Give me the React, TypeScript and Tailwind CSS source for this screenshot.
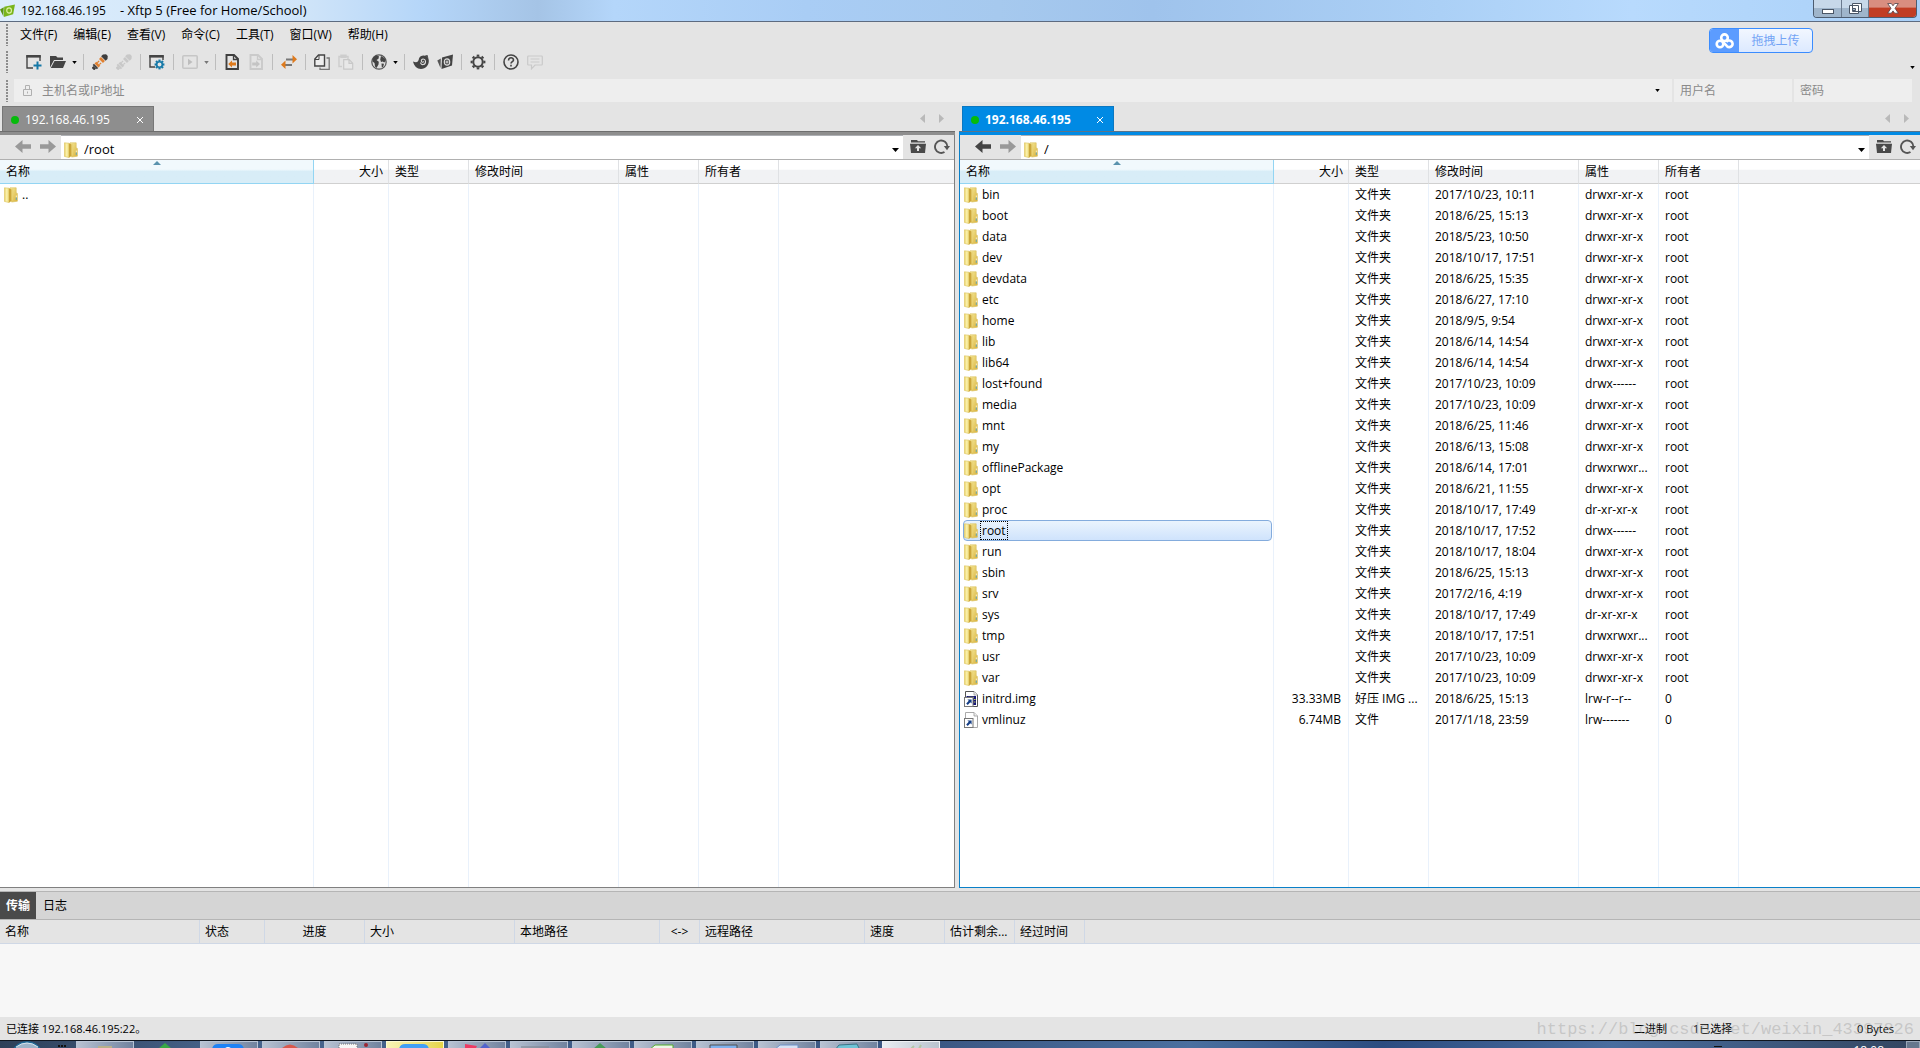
import React from "react";

type Entry = {
  name: string;
  size?: string;
  type: string;
  time: string;
  attr: string;
  owner: string;
  kind?: "folder" | "img" | "file";
  selected?: boolean;
};

const dir = (name: string, time: string, attr = "drwxr-xr-x", selected = false): Entry => ({
  name,
  type: "文件夹",
  time,
  attr,
  owner: "root",
  kind: "folder",
  selected,
});

const remoteEntries: Entry[] = [
  dir("bin", "2017/10/23, 10:11"),
  dir("boot", "2018/6/25, 15:13"),
  dir("data", "2018/5/23, 10:50"),
  dir("dev", "2018/10/17, 17:51"),
  dir("devdata", "2018/6/25, 15:35"),
  dir("etc", "2018/6/27, 17:10"),
  dir("home", "2018/9/5, 9:54"),
  dir("lib", "2018/6/14, 14:54"),
  dir("lib64", "2018/6/14, 14:54"),
  dir("lost+found", "2017/10/23, 10:09", "drwx------"),
  dir("media", "2017/10/23, 10:09"),
  dir("mnt", "2018/6/25, 11:46"),
  dir("my", "2018/6/13, 15:08"),
  dir("offlinePackage", "2018/6/14, 17:01", "drwxrwxr..."),
  dir("opt", "2018/6/21, 11:55"),
  dir("proc", "2018/10/17, 17:49", "dr-xr-xr-x"),
  dir("root", "2018/10/17, 17:52", "drwx------", true),
  dir("run", "2018/10/17, 18:04"),
  dir("sbin", "2018/6/25, 15:13"),
  dir("srv", "2017/2/16, 4:19"),
  dir("sys", "2018/10/17, 17:49", "dr-xr-xr-x"),
  dir("tmp", "2018/10/17, 17:51", "drwxrwxr..."),
  dir("usr", "2017/10/23, 10:09"),
  dir("var", "2017/10/23, 10:09"),
  { name: "initrd.img", size: "33.33MB", type: "好压 IMG ...", time: "2018/6/25, 15:13", attr: "lrw-r--r--", owner: "0", kind: "img" },
  { name: "vmlinuz", size: "6.74MB", type: "文件", time: "2017/1/18, 23:59", attr: "lrw-------", owner: "0", kind: "file" },
];

const localEntries: Entry[] = [{ name: "..", type: "", time: "", attr: "", owner: "", kind: "folder" }];

function Svg({ children, className = "size-4" }: { children: React.ReactNode; className?: string }) {
  return (
    <svg viewBox="0 0 16 16" className={`${className} shrink-0`} fill="none" aria-hidden="true">
      {children}
    </svg>
  );
}

function FolderIcon() {
  return (
    <svg viewBox="0 0 14 16" className="h-4 w-3.5 shrink-0" aria-hidden="true">
      <defs>
        <linearGradient id="fold" x1="0" x2="1" y1="0" y2="1">
          <stop offset="0" stopColor="#f6ea9a" />
          <stop offset="1" stopColor="#d9b23c" />
        </linearGradient>
        <linearGradient id="flap" x1="0" x2="1" y1="0" y2="0">
          <stop offset="0" stopColor="#e9d063" />
          <stop offset=".5" stopColor="#fbf2b0" />
          <stop offset="1" stopColor="#ecd670" />
        </linearGradient>
      </defs>
      <path d="M6 0.8H12.200V6L13.400 6.400V14.200L8 15L6 14Z" fill="url(#fold)" stroke="#d8bd5a" strokeWidth=".6" />
      <path d="M0.400 0.800L5 1.200V15.600L0.400 14.400Z" fill="url(#flap)" stroke="#dcc35e" strokeWidth=".6" />
      <path d="M5 1.200L7.600 2.400V13.600L5 15.800Z" fill="#cba63a" />
      <path d="M7.600 2.400L8.800 1.600V13.200L7.600 13.600Z" fill="#e9d277" />
      <path d="M12.300 8.500v2" stroke="#fbf6dc" strokeWidth=".9" />
      <path d="M12.300 10.500v2.400" stroke="#4fa3c8" strokeWidth=".9" />
    </svg>
  );
}

function LinkFileIcon({ image }: { image: boolean }) {
  return (
    <svg viewBox="0 0 14 16" className="h-4 w-3.5 shrink-0" aria-hidden="true">
      <path d="M1.5.5h8.5l3.5 3.5v11.5h-12z" fill="#fff" stroke={image ? "#555" : "#aaa"} />
      <path d="M10 .5V4h3.5" fill="#eee" stroke="#999" strokeWidth=".8" />
      {image && <path d="M2.5 5h9.500v9H8V8H2.5z" fill="#16167a" />}
      {image && <path d="M4 6.300h6M10 8.500h1.500M10 11h1.500" stroke="#b8c84a" />}
      <rect x=".5" y="6.500" width="8.500" height="9" fill="#fff" stroke="#777" />
      <path d="M3.400 8.400h4.200v4.200L6.300 11.300 3.700 14 2.200 12.600 4.800 9.800z" fill="#153e86" />
    </svg>
  );
}

function Caret({ className = "text-black" }: { className?: string }) {
  return (
    <svg viewBox="0 0 6 4" className={`h-[3px] w-[5px] shrink-0 ${className}`} aria-hidden="true">
      <path d="M0 0h6L3 4z" fill="currentColor" />
    </svg>
  );
}

function Grip() {
  return <span className="ml-1.5 h-[22px] w-0.5 shrink-0 bg-[repeating-linear-gradient(to_bottom,#8c8c8c_0_2px,transparent_2px_3px)]" />;
}

function Sep() {
  return (
    <span className="flex w-[9px] shrink-0 justify-center">
      <span className="h-4 w-px bg-[#bdbdbd]" />
    </span>
  );
}

function Tool({ label, children }: { label: string; children: React.ReactNode }) {
  return (
    <button type="button" aria-label={label} title={label} className="flex h-6 w-6 shrink-0 items-center justify-center">
      <Svg>{children}</Svg>
    </button>
  );
}

function Drop({ label, muted = false }: { label: string; muted?: boolean }) {
  return (
    <button type="button" aria-label={label} className="flex h-6 w-[9px] shrink-0 items-center justify-center">
      <Caret className={muted ? "text-[#777]" : "text-black"} />
    </button>
  );
}

const teeth = [0, 45, 90, 135, 180, 225, 270, 315];

function GearShape({ cx, cy, r, w, color }: { cx: number; cy: number; r: number; w: number; color: string }) {
  return (
    <g stroke={color}>
      <circle cx={cx} cy={cy} r={r} strokeWidth={w} />
      {teeth.map((a) => (
        <path key={a} d={`M${cx} ${cy - r - w / 2 + 0.3}v-${w}`} strokeWidth={w + 0.6} transform={`rotate(${a} ${cx} ${cy})`} />
      ))}
    </g>
  );
}

function Plug({ a, b }: { a: string; b: string }) {
  return (
    <g transform="rotate(-45 8 8)">
      <path d="M-2 6.200h2.600v3.600H-2z" fill={a} />
      <path d="M.600 5h1.800v6H.600z" fill={a} />
      <path d="M3 5.200h2.600v5.600H3z" fill={b} />
      <path d="M5.600 6.600h2.600M5.600 9.400h2.600" stroke={b} strokeWidth="1.200" />
      <path d="M9.400 5.200h2.800v5.600H9.400z" fill={b} />
      <path d="M12.800 4.800h2.600l2.400 2v2.400l-2.400 2h-2.600z" fill={a} />
    </g>
  );
}

function Toolbar() {
  return (
    <div role="toolbar" aria-label="工具栏" className="flex h-[34px] items-center pr-[5px]">
      <Grip />
      <span className="w-3.5 shrink-0" />
      <Tool label="新建">
        <path d="M7 14H1V2h13v5" stroke="#444" strokeWidth="1.400" />
        <path d="M.300 1h14.400v2.600H.300z" fill="#444" />
        <path d="M11.500 7.500v8M7.500 11.500h8" stroke="#1478a7" strokeWidth="2" />
      </Tool>
      <Tool label="打开">
        <path d="M0 13.500V2h6l1.500 1.500H13V6H4z" fill="#444" />
        <path d="M4.500 7H16l-3 7H.800z" fill="#444" />
      </Tool>
      <Drop label="打开选项" />
      <Sep />
      <Tool label="重新连接"><Plug a="#3d3d3d" b="#e08030" /></Tool>
      <Tool label="断开"><Plug a="#c8c8c8" b="#c8c8c8" /></Tool>
      <Sep />
      <Tool label="属性">
        <path d="M6 13H1V2h13v4" stroke="#444" strokeWidth="1.400" />
        <path d="M.300 1h14.400v2.600H.300z" fill="#444" />
        <GearShape cx={10.500} cy={10.500} r={2.800} w={1.600} color="#1478a7" />
      </Tool>
      <Sep />
      <Tool label="运行">
        <rect x=".8" y="1.800" width="14.400" height="12.400" rx="1" stroke="#c6c6c6" strokeWidth="1.600" />
        <path d="M6 4.800 10.500 8 6 11.200z" fill="#bdbdbd" />
      </Tool>
      <Drop label="运行选项" muted />
      <Sep />
      <Tool label="下载">
        <path d="M2.500 1h7.500l4 4v10H2.500z" stroke="#3f3f3f" strokeWidth="1.900" />
        <path d="M9.500 1v4.500H14" stroke="#3f3f3f" strokeWidth="1.300" />
        <path d="M4.200 10 8 6.500v2h4v3H8v2z" fill="#de7a1d" />
      </Tool>
      <Tool label="上传">
        <path d="M2.500 1h7.500l4 4v10H2.500z" stroke="#cacaca" strokeWidth="1.900" />
        <path d="M9.500 1v4.500H14" stroke="#cacaca" strokeWidth="1.300" />
        <path d="M12 10 8.200 6.500v2h-4v3h4v2z" fill="#c4c4c4" />
      </Tool>
      <Sep />
      <Tool label="同步">
        <path d="M4 11h7M5 5.500h7" stroke="#777" strokeWidth="1.800" />
        <path d="M4.500 6.500V15L0 10.700zM11.500 1v8.500L16 5.200z" fill="#de7a1d" />
      </Tool>
      <Sep />
      <Tool label="复制">
        <path d="M4.500 1h6v11H.800V5z" fill="#eee" stroke="#444" strokeWidth="1.400" />
        <path d="M5 1v4.500H1" stroke="#444" />
        <path d="M12.500 4h2.700v11.300H6V13.500" stroke="#777" strokeWidth="1.300" />
      </Tool>
      <Tool label="粘贴">
        <path d="M4 12.500H1V2.500h9V5M3 1.300h5v2H3z" stroke="#cdcdcd" strokeWidth="1.400" />
        <path d="M5.700 5.700h5.500l3.500 3.500v6h-9zM11 5.700v3.600h3.600" fill="#e8e8e8" stroke="#c8c8c8" strokeWidth="1.200" />
      </Tool>
      <Sep />
      <Tool label="编码">
        <circle cx="8" cy="8" r="7.200" fill="#dedede" stroke="#555" strokeWidth="1.200" />
        <path d="M2.200 3.500 5 1.500l3 .800-.500 2.400-2 1.300 2.300 1.800-.300 2.700-2 3.500-1.500-1.500L3.500 9 1.500 7.500zM10 2l3.500 2 1.200 3-1.500 1.500-1.500-1-1.700.500-.800-2.500zM10.500 9.500l2.500.300-.800 3-1.400.700z" fill="#444" />
      </Tool>
      <Drop label="编码选项" />
      <Sep />
      <Tool label="Xshell">
        <path d="M0 7.500c4 2 5.500 0 6-3C7 1 13 .300 15.200 4c2 5-1.200 11-7.200 11C4 15 1 12 0 7.500z" fill="#444" />
        <path d="M7.500 8.500c.500 3.500 5.500 2.500 5-1.500-.600-3-4.500-2.500-4.200 0 .300 1.800 2.200 1.500 2.200.200" stroke="#ddd" strokeWidth="1.100" />
        <path d="M12 1.500l2.500-.500.800 3z" fill="#444" />
      </Tool>
      <Tool label="Xftp">
        <path d="M5 3.500 16 .500 15 11.500 4.500 15z" fill="#444" />
        <path d="M3.800 4.500 3.500 14 .300 6.500z" fill="#555" />
        <ellipse cx="10" cy="8" rx="2.700" ry="3.200" stroke="#ddd" strokeWidth="1.200" />
        <path d="M10 6.500v3M8.500 8h3" stroke="#ddd" />
      </Tool>
      <Sep />
      <Tool label="选项"><GearShape cx={8} cy={8} r={4.700} w={2} color="#444" /></Tool>
      <Sep />
      <Tool label="帮助">
        <circle cx="8" cy="8" r="7" stroke="#444" strokeWidth="1.600" />
        <path d="M5.500 6.500C5.500 3 10.500 3 10.500 6c0 1.600-2.500 1.700-2.500 3.500M8 10.800v1.600" stroke="#444" strokeWidth="1.600" />
      </Tool>
      <Tool label="反馈">
        <path d="M1.500 2h13c.400 0 .800.300.800.800v7.400c0 .500-.400.800-.800.800H8l-3.500 3.800V11h-3c-.400 0-.800-.300-.800-.800V2.800c0-.500.400-.800.800-.800z" stroke="#c9c9c9" strokeWidth="1.200" />
        <path d="M3.500 5h9M3.500 8h9" stroke="#c9c9c9" strokeWidth="1.200" />
      </Tool>
      <button type="button" aria-label="更多" className="mt-2.5 ml-auto"><Caret /></button>
    </div>
  );
}

function TitleBar() {
  return (
    <header className="flex h-[22px] items-start justify-between border-b border-[#5d6b80] bg-[linear-gradient(to_right,#dcedfc_0%,#cfe4f9_16%,#b5d6f9_22%,#a5c4e6_28%,#b4d6fa_32%,#a9cdf5_42%,#a6c9ee_52%,#9fc3ec_60%,#abd0f6_75%,#b8dafd_85%,#a9d0f8_100%)]">
      <div className="flex h-[21px] items-center gap-1.5">
        <Svg className="size-[15px]">
          <path d="M4.500 4 16 1.500 14 12 4 15z" fill="#79b51c" />
          <path d="M4 4.500 3.500 14 0 7z" fill="#5b9416" />
          <ellipse cx="9.700" cy="8" rx="2.500" ry="2.800" stroke="#dff2a5" strokeWidth="1.200" />
        </Svg>
        <h1 className="flex gap-3.5 text-[12px]">
          <span>192.168.46.195</span>
          <span className="text-[13px] leading-4">- Xftp 5 (Free for Home/School)</span>
        </h1>
      </div>
      <div className="mr-[3px] flex h-[18px] overflow-hidden rounded-b border border-t-0 border-[#4c5c70]">
        <button type="button" aria-label="最小化" className="flex w-7 items-center justify-center border-r border-[#6a7a8e] bg-linear-to-b from-[#c7d8e9] from-50% to-[#9fb5cb] to-50%">
          <span className="mt-1.5 h-[5px] w-3 border border-[#4a5666] bg-white" />
        </button>
        <button type="button" aria-label="还原" className="flex w-[27px] items-center justify-center border-r border-[#6a7a8e] bg-linear-to-b from-[#c7d8e9] from-50% to-[#9fb5cb] to-50%">
          <svg viewBox="0 0 13 13" className="size-[13px]" fill="#fff" stroke="#4a5666" aria-hidden="true">
            <path d="M3.500 1.500h9v8h-9zM.500 3.500h9v8h-9z" />
            <path d="M3.500 6.500h3v2h-3z" fill="#9fb5cb" />
          </svg>
        </button>
        <button type="button" aria-label="关闭" className="flex w-[47px] items-center justify-center bg-linear-to-b from-[#d98e80] from-40% to-[#c13d24] to-50%">
          <svg viewBox="0 0 12 11" className="h-[11px] w-3" aria-hidden="true">
            <path d="M.700.500h3.600L6 2.800 7.700.500h3.600L8 5.300l3.300 4.900H7.700L6 7.900l-1.700 2.300H.700L4 5.300z" fill="#fff" stroke="#51424a" strokeWidth=".8" />
          </svg>
        </button>
      </div>
    </header>
  );
}

const menus = ["文件(F)", "编辑(E)", "查看(V)", "命令(C)", "工具(T)", "窗口(W)", "帮助(H)"];

function AddressBar() {
  const field = "h-full bg-[#eeeeee] text-xs text-[#222] outline-none placeholder:text-[#8a8a8a]";
  return (
    <div className="flex h-[23px] items-center pr-2">
      <Grip />
      <div className="ml-1.5 flex h-full flex-1 items-center bg-[#eeeeee] pr-3">
        <svg viewBox="0 0 9 11" className="ml-[9px] h-[11px] w-[9px] shrink-0" fill="none" stroke="#b0b0b0" aria-hidden="true">
          <path d="M.500 4.500h8v6h-8zM2.500 4.500v-4h4v4M4.500 6.500v2" />
        </svg>
        <input aria-label="主机名或IP地址" placeholder="主机名或IP地址" className={`${field} ml-2.5 min-w-0 flex-1`} />
        <button type="button" aria-label="主机历史"><Caret /></button>
      </div>
      <input aria-label="用户名" placeholder="用户名" className={`${field} ml-0.5 w-[118px] px-1.5`} />
      <input aria-label="密码" type="password" placeholder="密码" className={`${field} ml-0.5 w-[118px] px-1.5`} />
    </div>
  );
}

function HeadCell({ children, right = false }: { children?: React.ReactNode; right?: boolean }) {
  return (
    <th scope="col" className={`border-r border-b border-r-[#dfe1e4] border-b-[#d0d0d0] bg-linear-to-b from-white from-40% to-[#f1f2f4] to-45% p-0 font-normal ${right ? "pr-[5px] text-right" : "pl-1.5 text-left"}`}>
      {children}
    </th>
  );
}

function FileTable({ entries, label }: { entries: Entry[]; label: string }) {
  const cell = "overflow-hidden border-r border-[#e9f1fb] p-0 pl-1.5 whitespace-nowrap";
  return (
    <div className="grid min-h-0 flex-1 bg-white">
      <table aria-label={label} className="h-full w-full table-fixed border-separate border-spacing-0 text-xs">
        <colgroup>
          <col className="w-[314px]" />
          <col className="w-[75px]" />
          <col className="w-[80px]" />
          <col className="w-[150px]" />
          <col className="w-[80px]" />
          <col className="w-[80px]" />
          <col />
        </colgroup>
        <thead>
          <tr className="h-6">
            <th scope="col" aria-sort="ascending" className="relative border-r border-b border-[#93d5f3] bg-linear-to-b from-[#f1f9fd] from-40% to-[#d8edf7] to-50% p-0 pl-1.5 text-left font-normal">
              名称
              <svg viewBox="0 0 8 4" className="absolute top-px left-1/2 h-1 w-2 -translate-x-1/2" aria-hidden="true">
                <path d="M0 4 4 0l4 4z" fill="#5a93ae" />
              </svg>
            </th>
            <HeadCell right>大小</HeadCell>
            <HeadCell>类型</HeadCell>
            <HeadCell>修改时间</HeadCell>
            <HeadCell>属性</HeadCell>
            <HeadCell>所有者</HeadCell>
            <th className="border-b border-[#d0d0d0] bg-linear-to-b from-white from-40% to-[#f1f2f4] to-45% p-0" />
          </tr>
        </thead>
        <tbody>
          {entries.map((e) => (
            <tr key={e.name} className="h-[21px]">
              <td className="overflow-hidden border-r border-[#e9f1fb] p-0 pr-px pl-[3px]">
                <div className={e.selected ? "flex h-[21px] items-center rounded-sm border border-[#84acdd] bg-linear-to-b from-[#ebf4fd] to-[#cfe3fc]" : "flex h-[21px] items-center border border-transparent"}>
                  {e.kind === "folder" ? <FolderIcon /> : <LinkFileIcon image={e.kind === "img"} />}
                  <span className={e.selected ? "ml-0.5 border border-dotted border-black px-px leading-[17px]" : "ml-0.5 border border-transparent px-px leading-[17px]"}>{e.name}</span>
                </div>
              </td>
              <td className={`${cell} pr-[7px] text-right`}>{e.size}</td>
              <td className={cell}>{e.type}</td>
              <td className={cell}>{e.time}</td>
              <td className={cell}>{e.attr}</td>
              <td className={cell}>{e.owner}</td>
              <td className="p-0" />
            </tr>
          ))}
          <tr aria-hidden="true">
            <td className={cell} />
            <td className={cell} />
            <td className={cell} />
            <td className={cell} />
            <td className={cell} />
            <td className={cell} />
            <td className="p-0" />
          </tr>
        </tbody>
      </table>
    </div>
  );
}

function Arrow({ color, flip = false }: { color: string; flip?: boolean }) {
  return (
    <Svg>
      <path d={flip ? "M16 7.500 8.500 1v4.200H0v4.600h8.500V14z" : "M0 7.500 7.500 1v4.200H16v4.600H7.500V14z"} fill={color} />
    </Svg>
  );
}

function Pane({ path, entries, active }: { path: string; entries: Entry[]; active: boolean }) {
  return (
    <section aria-label={path} className={active ? "flex min-w-0 flex-[961] flex-col" : "flex min-w-0 flex-[955] flex-col"}>
      <div className="flex h-[29px] items-end">
        <div
          role="tab"
          aria-selected={active}
          className={
            active
              ? "ml-[3px] flex h-[25px] w-[152px] items-center border border-b-0 border-[#0a78c2] bg-[#008ae4] pt-0.5 pr-2.5 pl-2 font-bold text-white"
              : "ml-0.5 flex h-[25px] w-[152px] items-center border border-b-0 border-[#777] bg-[#8e8e8e] pt-0.5 pr-2.5 pl-2 text-white"
          }
        >
          <span className="size-2 rounded-full bg-[#05bb0b]" />
          <span className="ml-1.5 flex-1 text-xs">192.168.46.195</span>
          <button type="button" aria-label="关闭标签">
            <svg viewBox="0 0 6 6" className="size-1.5" stroke="#fff" aria-hidden="true"><path d="M0 0l6 6M6 0 0 6" /></svg>
          </button>
        </div>
        <div className="mr-[11px] mb-2 ml-auto flex gap-3.5">
          <button type="button" aria-label="上一个标签"><svg viewBox="0 0 5 9" className="h-[9px] w-[5px]" aria-hidden="true"><path d="M5 0v9L0 4.500z" fill="#b9b9b9" /></svg></button>
          <button type="button" aria-label="下一个标签"><svg viewBox="0 0 5 9" className="h-[9px] w-[5px]" aria-hidden="true"><path d="M0 0v9l5-4.500z" fill="#b9b9b9" /></svg></button>
        </div>
      </div>
      <div className={active ? "h-1 border-t border-[#5c7488] bg-[#008ae4]" : "h-1 border-t border-[#6e6e6e] bg-[#8e8e8e]"} />
      <div className={active ? "flex min-h-0 flex-1 flex-col border-b border-l border-[#0a80c8]" : "flex min-h-0 flex-1 flex-col border-r border-b border-[#808080]"}>
        <div className="flex h-[25px] items-center border-b border-[#b0b0b0] pl-[15px]">
          <button type="button" aria-label="后退"><Arrow color={active ? "#444" : "#999"} /></button>
          <button type="button" aria-label="前进" className="ml-[9px]"><Arrow color="#999" flip /></button>
          <div className="ml-[5px] flex h-full min-w-0 flex-1 items-center border-t border-[#aeb0b4] bg-white pt-1 pr-1 pl-[3px]">
            <FolderIcon />
            <input aria-label="路径" defaultValue={path} className="ml-1.5 min-w-0 flex-1 text-[13px] outline-none" />
            <button type="button" aria-label="路径历史">
              <svg viewBox="0 0 7 4" className="h-1 w-[7px]" aria-hidden="true"><path d="M0 0h7L3.500 4z" /></svg>
            </button>
          </div>
          <button type="button" aria-label="上级目录" className="ml-[7px]">
            <Svg>
              <path d="M1 3.500V1h6l1 1.200h7v1.300z" fill="#4a4a4a" />
              <path d="M0 4.800h16L15 14H1z" fill="#4a4a4a" />
              <path d="M8 6 4.800 9.300H7V12h2V9.300h2.200z" fill="#e4e4e4" />
            </Svg>
          </button>
          <button type="button" aria-label="刷新" className="mr-1 ml-2">
            <Svg>
              <path d="M10.500 13A6.200 6.200 0 1 1 13.400 7.500" stroke="#555" strokeWidth="1.900" />
              <path d="M9.800 7H16l-3 4.200z" fill="#555" />
            </Svg>
          </button>
        </div>
        <FileTable entries={entries} label={`${path} 文件`} />
      </div>
    </section>
  );
}

const transferCols = [
  { label: "名称", col: "w-[200px]" },
  { label: "状态", col: "w-[65px]" },
  { label: "进度", col: "w-[100px]", center: true },
  { label: "大小", col: "w-[150px]" },
  { label: "本地路径", col: "w-[145px]" },
  { label: "<->", col: "w-[40px]", center: true },
  { label: "远程路径", col: "w-[165px]" },
  { label: "速度", col: "w-[80px]" },
  { label: "估计剩余...", col: "w-[70px]" },
  { label: "经过时间", col: "w-[70px]" },
];

function TransferPanel() {
  return (
    <section aria-label="传输" className="mt-[3px]">
      <div role="tablist" className="flex h-[29px] border-y border-[#b5b5b5] bg-[#d5d5d5] text-xs">
        <button type="button" role="tab" aria-selected="true" className="w-9 bg-[#4a4a4a] font-bold text-white">传输</button>
        <button type="button" role="tab" aria-selected="false" className="w-9 pl-0.5">日志</button>
      </div>
      <table className="w-full table-fixed border-separate border-spacing-0 text-xs">
        <colgroup>
          {transferCols.map((c) => <col key={c.label} className={c.col} />)}
          <col />
        </colgroup>
        <thead>
          <tr className="h-6">
            {transferCols.map((c) => (
              <th key={c.label} scope="col" className={`overflow-hidden border-r border-b border-[#cfd8e6] p-0 font-normal whitespace-nowrap ${c.center ? "text-center" : "pl-[5px] text-left"}`}>{c.label}</th>
            ))}
            <th className="border-b border-[#cfd8e6] p-0" />
          </tr>
        </thead>
      </table>
      <div className="h-[73px] bg-[#f7f7f7]" />
    </section>
  );
}

const tasks: { gap: string; yellow?: boolean; flat?: boolean; light?: boolean; icon: React.ReactNode }[] = [
  { gap: "", icon: <path d="M13 4h14v2H13z" fill="#b9b08a" /> },
  { gap: "ml-px", flat: true, icon: <path d="M15 6l6-5 6 5z" fill="#39a845" /> },
  { gap: "ml-[7px]", icon: <><path d="M3 7q1-5 6-5h20q5 0 6 5z" fill="#1f82f5" /><path d="M15 7q4-4 8 0z" fill="#fff" /></> },
  { gap: "ml-1", icon: <path d="M10 7q9-9 18 0z" fill="#d9584c" /> },
  { gap: "ml-1", icon: <><path d="M6 2h18v5H6z" fill="#f7f7f7" stroke="#777" strokeDasharray="1 1" /><circle cx="33" cy="3" r="2" fill="#9c2633" /></> },
  { gap: "ml-1", yellow: true, icon: <path d="M4 7q1-5 6-5h18q5 0 6 5z" fill="#429ff5" /> },
  { gap: "ml-1", icon: <><path d="M8 2l12 2-2 4H8z" fill="#ef3a63" /><path d="M22 7l6-6 6 6z" fill="#5363cc" /></> },
  { gap: "ml-1", icon: <path d="M2 5h28" stroke="#7c828c" /> },
  { gap: "ml-1", icon: <path d="M12 7l7-6 7 6z" fill="#479b58" /> },
  { gap: "ml-1", icon: <path d="M6 8l6-5h18v5z" fill="#edf7e8" stroke="#55ad2c" /> },
  { gap: "ml-1", icon: <path d="M5 8V3h27v5z" fill="#7eb1ed" stroke="#4f4f4f" /> },
  { gap: "ml-1", icon: <path d="M7 8l6-5h18v5z" fill="#d7e2f4" stroke="#6f92c8" /> },
  { gap: "ml-1", icon: <path d="M6 8l4-5 18-1 3 6z" fill="#6fc3d6" stroke="#3b7386" /> },
  { gap: "ml-1", light: true, icon: <path d="M20 7l3-3M28 7l2-4" stroke="#b3c6a6" strokeWidth="2" /> },
];

function TaskBar() {
  return (
    <nav aria-label="任务栏" className="flex h-2 overflow-hidden border-t border-[#10161f] bg-[linear-gradient(to_right,#2e4059_0%,#47648c_12%,#3a5682_48%,#4a6f9f_62%,#2c4c80_72%,#496d9f_84%,#33455f_100%)]">
      <button type="button" aria-label="开始" className="w-[76px]">
        <svg viewBox="0 0 76 7" className="h-[7px] w-[76px]" aria-hidden="true">
          <circle cx="27" cy="17" r="16" fill="#9db4c9" stroke="#1f6a98" strokeWidth="1.500" />
          <path d="M16 6q11-8 22 0" stroke="#d6e3ec" fill="none" />
          <path d="M58 5h8" stroke="#111" strokeWidth="2" strokeDasharray="2 1" />
        </svg>
      </button>
      {tasks.map((t, i) => (
        <button
          key={i}
          type="button"
          aria-label={`任务 ${i + 1}`}
          className={`${t.gap} w-[58px] shrink-0 border-x border-t ${
            t.flat
              ? "border-transparent"
              : t.yellow
                ? "border-[#fdfbd2] bg-linear-to-r from-[#f8f3b5] to-[#e6d546]"
                : t.light
                  ? "border-[#eef1f5] bg-linear-to-r from-[#e9edf2] to-[#b9c3ce]"
                  : "border-[#b9c5d6] bg-linear-to-r from-[#b8c2d2] to-[#71839f]"
          }`}
        >
          <svg viewBox="0 0 40 6" className="mx-auto h-1.5 w-10" fill="none" aria-hidden="true">{t.icon}</svg>
        </button>
      ))}
      <span className="mr-[131px] mb-px ml-auto h-px w-2 self-end bg-[#111]" />
      <span className="mr-[22px] h-[7px] overflow-hidden pt-1 text-xs leading-none text-white">18:08</span>
      <button type="button" aria-label="显示桌面" className="w-3.5 border border-b-0 border-[#9aa7b8] bg-[#66778d]" />
    </nav>
  );
}

export default function App() {
  return (
    <div className="flex h-screen min-h-[800px] flex-col overflow-hidden bg-[#e4e4e4] font-['Open_Sans','Noto_Sans_CJK_SC',sans-serif] text-black">
      <TitleBar />
      <div className="relative">
        <div role="menubar" className="flex h-[23px] items-center pt-0.5">
          <Grip />
          <div className="ml-3 flex gap-4 text-xs">
            {menus.map((m) => <button key={m} type="button" role="menuitem">{m}</button>)}
          </div>
        </div>
        <Toolbar />
        <AddressBar />
        <button type="button" className="absolute top-1.5 right-[107px] flex h-[25px] w-[104px] items-center overflow-hidden rounded border border-[#3a8cff] bg-linear-to-b from-[#f2f7ff] to-[#dce9ff] text-xs text-[#73a4f5]">
          <span className="flex h-full w-[29px] items-center justify-center bg-[#5c9cff]">
            <svg viewBox="0 0 19 16" className="h-4 w-[19px]" fill="none" stroke="#fff" strokeWidth="2.600" aria-hidden="true">
              <circle cx="9.500" cy="4.700" r="3.300" />
              <circle cx="5" cy="11" r="3.300" />
              <path d="M7.500 8.500 12 13.200a3.300 3.300 0 1 0-.600-4" />
            </svg>
          </span>
          <span className="flex-1 text-center">拖拽上传</span>
        </button>
      </div>
      <main className="flex min-h-0 flex-1 gap-1">
        <Pane path="/root" entries={localEntries} active={false} />
        <Pane path="/" entries={remoteEntries} active />
      </main>
      <TransferPanel />
      <footer className="relative flex h-[23px] items-center pt-0.5 pl-1.5 text-[11px]">
        <span>已连接 192.168.46.195:22。</span>
        <span className="ml-auto w-[59px]">二进制</span>
        <span className="w-[164px]">1已选择</span>
        <span className="w-[63px]">0 Bytes</span>
        <span className="pointer-events-none absolute right-1.5 font-['Liberation_Mono',monospace] text-[17px] leading-5 text-[#999]/40">https://blog.csdn.net/weixin_43397826</span>
      </footer>
      <TaskBar />
    </div>
  );
}
